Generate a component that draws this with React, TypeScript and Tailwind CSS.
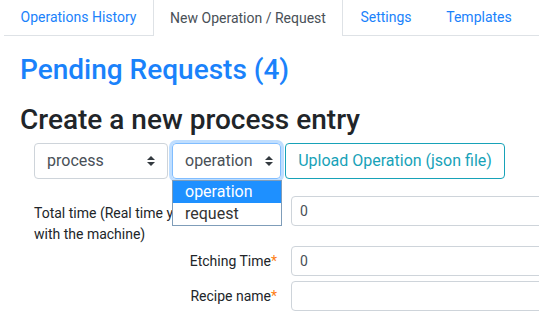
import React from "react";

const Arrows = () => (
  <svg width="8" height="10" viewBox="0 0 8 10" className="shrink-0">
    <path d="M4 0 L8 4 H0 Z" fill="#343a40" />
    <path d="M4 10 L8 6 H0 Z" fill="#343a40" />
  </svg>
);

export default function App() {
  return (
    <div
      className="w-[539px] h-[316px] overflow-hidden bg-white relative"
      style={{ fontFamily: "Roboto, 'Noto Sans', sans-serif" }}
    >
      {/* tabs */}
      <div className="ml-[4px] flex h-[36px] border-b border-[#dee2e6] text-[14px]">
        <div className="flex w-[149px] items-center justify-center text-[#1a82fb]">Operations History</div>
        <div className="-mb-px flex w-[190px] items-center justify-center border-x border-[#dee2e6] bg-white text-[#495057]">
          New Operation / Request
        </div>
        <div className="flex w-[86px] items-center justify-center text-[#1a82fb]">Settings</div>
        <div className="flex w-[100px] items-center justify-center text-[#1a82fb]">Templates</div>
      </div>

      <div className="pl-[20px]">
        <h3 className="mt-[17px] text-[28px] leading-[34px] font-medium text-[#1a82fb]">Pending Requests (4)</h3>
        <h2 className="mt-[16px] text-[28px] leading-[34px] font-medium text-[#212529]">Create a new process entry</h2>

        <div className="ml-[14px] mt-[6px] flex gap-[4px]">
          <div className="flex h-[36px] w-[134px] items-center justify-between rounded-[4px] border border-[#ced4da] pl-[12px] pr-[12px] text-[16px] text-[#495057]">
            <span>process</span>
            <Arrows />
          </div>
          <div className="flex h-[36px] w-[109px] items-center justify-between rounded-[4px] border border-[#80bdff] pl-[12px] pr-[7px] text-[16px] text-[#495057] shadow-[0_0_0_3px_rgba(0,123,255,0.25)]">
            <span>operation</span>
            <Arrows />
          </div>
          <div className="flex h-[36px] w-[220px] items-center justify-center rounded-[4px] border border-[#17a2b8] text-[16px] text-[#17a2b8]">
            Upload Operation (json file)
          </div>
        </div>

        <div className="ml-[14px] mt-[17px] flex flex-col text-[14px] text-[#212529]">
          <div className="flex gap-[8px]">
            <div className="w-[249px] shrink-0 pt-[7px] leading-[21px]">
              Total time (Real time you interacted
              <br />
              with the machine)
            </div>
            <div className="flex h-[30px] w-[300px] shrink-0 items-center rounded-[4px] border border-[#ced4da] pl-[8px] text-[#495057]">0</div>
          </div>
          <div className="mt-[1px] flex gap-[8px]">
            <div className="flex w-[249px] shrink-0 items-center justify-end pr-[6px]">
              Etching Time<span className="text-[#fd7e14]">*</span>
            </div>
            <div className="flex h-[30px] w-[300px] shrink-0 items-center rounded-[4px] border border-[#ced4da] pl-[8px] text-[#495057]">0</div>
          </div>
          <div className="mt-[5px] flex gap-[8px]">
            <div className="flex w-[249px] shrink-0 items-center justify-end pr-[6px]">
              Recipe name<span className="text-[#fd7e14]">*</span>
            </div>
            <div className="h-[30px] w-[300px] shrink-0 rounded-[4px] border border-[#ced4da]" />
          </div>
        </div>
      </div>

      {/* open select dropdown */}
      <div className="absolute left-[172px] top-[180px] w-[110px] border border-[#7f9db9] bg-white text-[16px] leading-[22px]">
        <div className="bg-[#1e90ff] pl-[12px] text-white">operation</div>
        <div className="pl-[12px] text-[#333]">request</div>
      </div>
    </div>
  );
}
